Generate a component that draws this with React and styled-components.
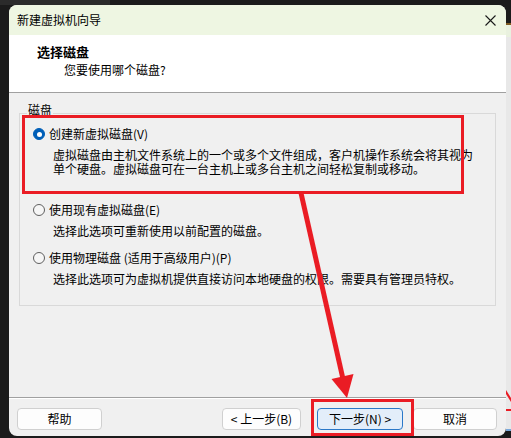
import React from "react";
import styled, { createGlobalStyle } from "styled-components";

const GlobalStyle = createGlobalStyle`
  html, body { margin: 0; padding: 0; }
  body {
    width: 511px;
    height: 438px;
    overflow: hidden;
    background: #1c1c1c;
    font-family: "Noto Sans CJK SC", "Noto Sans", sans-serif;
    color: #000;
  }
`;

const Desktop = styled.div`
  position: relative;
  width: 511px;
  height: 438px;
  box-sizing: border-box;
  padding: 5px 0 0 9px;
  background:
    linear-gradient(#2b2b2b, #2b2b2b) 0 0 / 110px 5px no-repeat,
    #1b1b1b;
`;

const BackWindow = styled.div`
  position: absolute;
  left: 506px;
  top: 23px;
  width: 5px;
  height: 404px;
  border-top: 2px solid #7d5a22;
  background: linear-gradient(#e9f1df 0 12px, #e8e8e8 12px);
  border-bottom: 2px solid #79a9dc;
`;

const Window = styled.div`
  position: relative;
  width: 497px;
  height: 431px;
  display: flex;
  flex-direction: column;
  background: #f0f0f0;
  border-radius: 8px;
  overflow: hidden;
`;

const TitleBar = styled.div`
  flex: none;
  height: 30px;
  display: flex;
  align-items: center;
  justify-content: space-between;
  padding: 0 10px 0 8px;
  background: #eef6e2;
  font-size: 12px;
  line-height: 16px;
`;

const CloseIcon = styled.svg`
  width: 11px;
  height: 11px;
  display: block;
`;

const Header = styled.div`
  flex: none;
  height: 57px;
  box-sizing: border-box;
  padding: 8px 0 0 28px;
  background: #ffffff;
`;

const HeaderTitle = styled.div`
  font-size: 13px;
  font-weight: 700;
  line-height: 18px;
`;

const HeaderSub = styled.div`
  margin: 1px 0 0 27px;
  font-size: 12px;
  line-height: 16px;
`;

const Rule = styled.div`
  flex: none;
  height: 1px;
  background: #a0a0a0;
`;

const Body = styled.div`
  flex: 1;
  display: flex;
  flex-direction: column;
  padding-top: 20px;
`;

const GroupBox = styled.div`
  position: relative;
  margin: 0 10px;
  border: 1px solid #d9d9d9;
  padding: 12px 0 19px 13px;
`;

const GroupLabel = styled.span`
  position: absolute;
  top: -12px;
  left: 7px;
  padding: 0 1px;
  background: #f0f0f0;
  font-size: 12px;
  line-height: 16px;
`;

const Option = styled.div`
  margin-top: ${(p) => (p.$first ? "0" : "12px")};
`;

const OptionRow = styled.div`
  display: flex;
  align-items: center;
  height: 16px;
  font-size: 12px;
  line-height: 16px;
`;

const Radio = styled.span`
  flex: none;
  position: relative;
  width: 12px;
  height: 12px;
  box-sizing: border-box;
  border-radius: 50%;
  margin-right: 4px;
  background: ${(p) => (p.$checked ? "#005fb8" : "#f6f6f6")};
  border: 1px solid ${(p) => (p.$checked ? "#005fb8" : "#5f5f5f")};
  &::after {
    content: "";
    display: ${(p) => (p.$checked ? "block" : "none")};
    position: absolute;
    left: 2.5px;
    top: 2.5px;
    width: 5px;
    height: 5px;
    border-radius: 50%;
    background: #ffffff;
  }
`;

const Desc = styled.div`
  margin: 6px 0 0 20px;
  min-height: ${(p) => p.$minHeight || 0}px;
  font-size: 12px;
  line-height: 14px;
  white-space: nowrap;
`;

const Footer = styled.div`
  flex: none;
  height: 38px;
  box-sizing: border-box;
  display: flex;
  align-items: flex-start;
  padding: 9px 9px 0 8px;
  border-top: 1px solid #ffffff;
`;

const Spacer = styled.div`
  flex: 1;
`;

const Button = styled.div`
  flex: none;
  width: ${(p) => p.$w}px;
  height: 22px;
  margin-left: ${(p) => p.$ml || 0}px;
  box-sizing: border-box;
  display: flex;
  align-items: center;
  justify-content: center;
  border-radius: 4px;
  border: 1px solid ${(p) => (p.$primary ? "#2a78c8" : "#d0d0d0")};
  background: ${(p) => (p.$primary ? "#e3eefa" : "#fdfdfd")};
  font-size: 12px;
  line-height: 16px;
  white-space: pre;
`;

const Annotations = styled.svg`
  position: absolute;
  left: 0;
  top: 0;
  width: 511px;
  height: 438px;
  pointer-events: none;
`;

const RED = "#ea1c24";

export default function App() {
  return (
    <>
      <GlobalStyle />
      <Desktop>
        <BackWindow />
        <Window>
          <TitleBar>
            <span>新建虚拟机向导</span>
            <CloseIcon viewBox="0 0 11 11">
              <path d="M0.5 0.5 L10.5 10.5 M10.5 0.5 L0.5 10.5" stroke="#1a1a1a" strokeWidth="1.1" fill="none" />
            </CloseIcon>
          </TitleBar>
          <Header>
            <HeaderTitle>选择磁盘</HeaderTitle>
            <HeaderSub>您要使用哪个磁盘?</HeaderSub>
          </Header>
          <Rule />
          <Body>
            <GroupBox>
              <GroupLabel>磁盘</GroupLabel>
              <Option $first>
                <OptionRow>
                  <Radio $checked />
                  创建新虚拟磁盘(V)
                </OptionRow>
                <Desc $minHeight={42}>
                  虚拟磁盘由主机文件系统上的一个或多个文件组成，客户机操作系统会将其视为
                  <br />
                  单个硬盘。虚拟磁盘可在一台主机上或多台主机之间轻松复制或移动。
                </Desc>
              </Option>
              <Option>
                <OptionRow>
                  <Radio />
                  使用现有虚拟磁盘(E)
                </OptionRow>
                <Desc>选择此选项可重新使用以前配置的磁盘。</Desc>
              </Option>
              <Option>
                <OptionRow>
                  <Radio />
                  使用物理磁盘 (适用于高级用户)(P)
                </OptionRow>
                <Desc>选择此选项可为虚拟机提供直接访问本地硬盘的权限。需要具有管理员特权。</Desc>
              </Option>
            </GroupBox>
          </Body>
          <Rule />
          <Footer>
            <Button $w={85}>帮助</Button>
            <Spacer />
            <Button $w={79}>{"< 上一步(B)"}</Button>
            <Button $w={86} $ml={16} $primary>{"下一步(N) >"}</Button>
            <Button $w={84} $ml={10}>取消</Button>
          </Footer>
        </Window>
        <Annotations viewBox="0 0 511 438">
          <rect x="23.5" y="116.5" width="439" height="76" fill="none" stroke={RED} strokeWidth="3" />
          <rect x="312.5" y="400.5" width="100" height="34" fill="none" stroke={RED} strokeWidth="3" />
          <line x1="301" y1="193" x2="343" y2="379" stroke={RED} strokeWidth="5" />
          <polygon points="347,398 353.5,374 331.5,379" fill={RED} />
          <path d="M506 390 L511 398 L511 402 L506 394 Z" fill={RED} />
          <rect x="506" y="409" width="5" height="2" fill={RED} />
        </Annotations>
      </Desktop>
    </>
  );
}
